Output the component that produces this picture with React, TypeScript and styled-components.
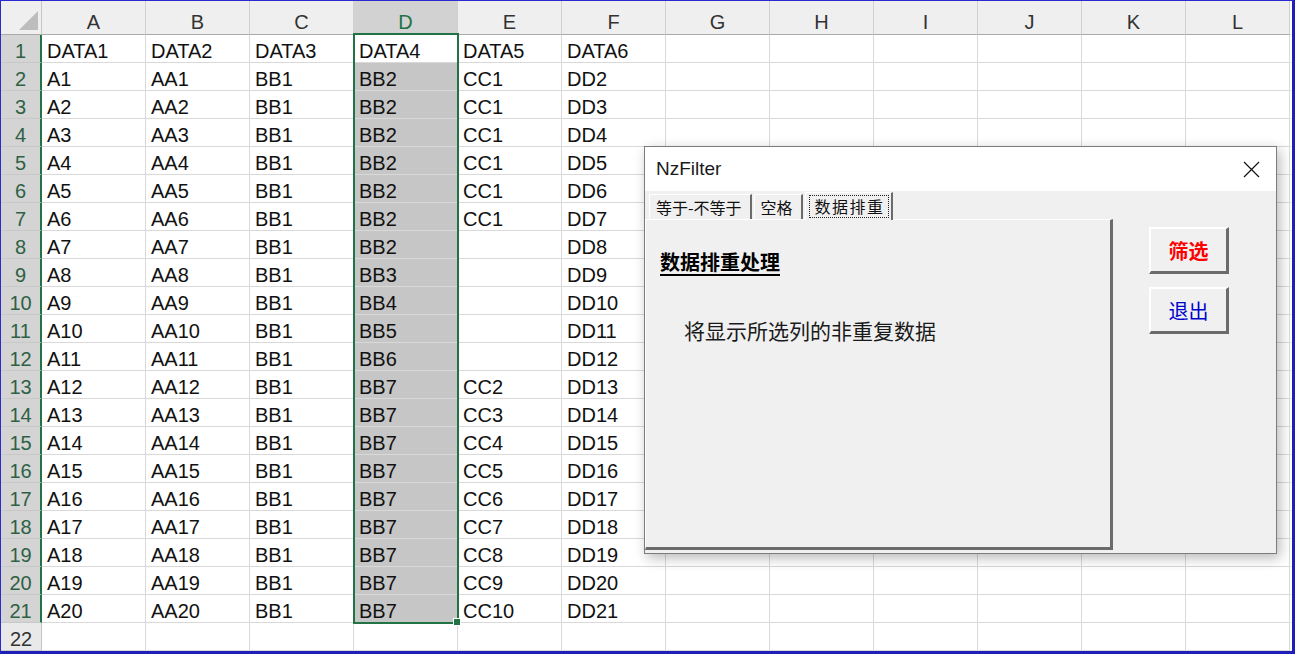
import React from 'react'
import styled, { createGlobalStyle } from 'styled-components'

const GlobalStyle = createGlobalStyle`
  html, body {
    margin: 0;
    padding: 0;
    background: #ffffff;
  }
  body {
    font-family: 'Liberation Sans', 'Noto Sans CJK SC', sans-serif;
  }
`

const COLS = ['A', 'B', 'C', 'D', 'E', 'F', 'G', 'H', 'I', 'J', 'K', 'L']
const ACTIVE_COL = 3

const buildRows = (): string[][] => {
  const rows: string[][] = [['DATA1', 'DATA2', 'DATA3', 'DATA4', 'DATA5', 'DATA6']]
  for (let i = 1; i <= 20; i++) {
    let d = 'BB7'
    if (i <= 7) d = 'BB2'
    else if (i <= 11) d = `BB${i - 5}`
    let e = ''
    if (i <= 6) e = 'CC1'
    else if (i >= 12) e = `CC${i - 10}`
    rows.push([`A${i}`, `AA${i}`, 'BB1', d, e, `DD${i + 1}`])
  }
  rows.push([])
  return rows
}

const Frame = styled.div`
  position: relative;
  width: 1295px;
  height: 654px;
  box-sizing: border-box;
  border-top: 1px solid #2a2ad0;
  border-left: 1px solid #2a2ad0;
  border-right: 3px solid #1f1fb8;
  border-bottom: 3px solid #1f1fb8;
  overflow: hidden;
  background: #ffffff;
`

const Sheet = styled.div`
  position: relative;
  display: grid;
  grid-template-columns: 41px repeat(12, 104px) 1fr;
  grid-template-rows: 34px repeat(22, 28px);
`

const Corner = styled.div`
  box-sizing: border-box;
  background: #efefef;
  border-right: 1px solid #c6c6c6;
  border-bottom: 1px solid #ababab;
  display: flex;
  align-items: flex-end;
  justify-content: flex-end;
  padding: 0 3px 4px 0;
`

const Triangle = styled.div`
  width: 0;
  height: 0;
  border-left: 19px solid transparent;
  border-bottom: 19px solid #bdbdbd;
`

const ColHead = styled.div<{ $active?: boolean }>`
  box-sizing: border-box;
  background: ${(p) => (p.$active ? '#d2d2d2' : '#efefef')};
  color: ${(p) => (p.$active ? '#217346' : '#333333')};
  border-right: 1px solid #d0d0d0;
  border-bottom: ${(p) => (p.$active ? '2px solid #217346' : '1px solid #ababab')};
  font-size: 20px;
  display: flex;
  align-items: center;
  justify-content: center;
  padding-top: 10px;
`

const RowHead = styled.div<{ $active?: boolean }>`
  box-sizing: border-box;
  background: ${(p) => (p.$active ? '#d4d4d4' : '#e9e9e9')};
  color: ${(p) => (p.$active ? '#2e6144' : '#333333')};
  border-right: ${(p) => (p.$active ? '2px solid #217346' : '1px solid #c6c6c6')};
  border-bottom: 1px solid #c8c8c8;
  font-size: 20px;
  display: flex;
  align-items: center;
  justify-content: center;
  padding-top: 6px;
`

const Cell = styled.div<{ $shade?: boolean }>`
  box-sizing: border-box;
  background: ${(p) => (p.$shade ? '#c6c6c6' : '#ffffff')};
  border-right: 1px solid #d9d9d9;
  border-bottom: 1px solid #d9d9d9;
  color: #111111;
  font-size: 20px;
  line-height: 27px;
  padding: 3px 0 0 5px;
  white-space: nowrap;
  overflow: hidden;
`

const Filler = styled.div`
  background: #ffffff;
  border-bottom: 1px solid #ececec;
`

const Selection = styled.div`
  position: absolute;
  left: 352px;
  top: 32px;
  width: 106px;
  height: 591px;
  box-sizing: border-box;
  border: 2px solid #217346;
  pointer-events: none;
`

const FillHandle = styled.div`
  position: absolute;
  left: 452px;
  top: 617px;
  width: 8px;
  height: 8px;
  box-sizing: border-box;
  background: #217346;
  border: 1px solid #ffffff;
`

/* ---- dialog ---- */

const Dialog = styled.div`
  position: absolute;
  left: 643px;
  top: 145px;
  width: 633px;
  height: 408px;
  box-sizing: border-box;
  border: 1px solid #7c7c7c;
  box-shadow: 3px 4px 12px rgba(0, 0, 0, 0.28);
  display: flex;
  flex-direction: column;
  font-family: 'Noto Sans CJK SC', 'Liberation Sans', sans-serif;
`

const TitleBar = styled.div`
  height: 44px;
  background: #ffffff;
  display: flex;
  align-items: center;
  justify-content: space-between;
  padding: 0 16px 0 11px;
`

const Title = styled.span`
  font-family: 'Liberation Sans', sans-serif;
  font-size: 19px;
  color: #1a1a1a;
`

const Body = styled.div`
  flex: 1;
  background: #f0f0f0;
  display: flex;
`

const LeftPane = styled.div`
  width: 468px;
  display: flex;
  flex-direction: column;
`

const TabStrip = styled.div`
  height: 28px;
  display: flex;
  align-items: flex-end;
  padding-left: 4px;
  gap: 2px;
  position: relative;
  z-index: 1;
`

const Tab = styled.div<{ $selected?: boolean }>`
  box-sizing: border-box;
  height: ${(p) => (p.$selected ? '28px' : '25px')};
  margin-bottom: ${(p) => (p.$selected ? '-1px' : '0')};
  background: #f0f0f0;
  border-top: 1px solid #ffffff;
  border-left: 1px solid #ffffff;
  border-right: 2px solid #6b6b6b;
  padding: ${(p) => (p.$selected ? '2px 2px 2px 3px' : '0 8px 0 6px')};
  font-size: 16px;
  color: #111111;
  display: flex;
  align-items: center;
`

const FocusBox = styled.span`
  border: 1px dotted #222222;
  padding: 0 3px 0 5px;
  letter-spacing: 1.5px;
  line-height: 21px;
`

const Panel = styled.div`
  height: 331px;
  box-sizing: border-box;
  border-top: 1px solid #ffffff;
  border-left: 1px solid #ffffff;
  border-right: 3px solid #6b6b6b;
  border-bottom: 3px solid #6b6b6b;
  display: flex;
  flex-direction: column;
  padding: 27px 0 0 14px;
`

const Heading = styled.div`
  font-size: 20px;
  font-weight: 700;
  text-decoration: underline;
  text-underline-offset: 4px;
  color: #000000;
  line-height: 30px;
`

const Note = styled.div`
  margin: 38px 0 0 24px;
  font-size: 21px;
  color: #1a1a1a;
  line-height: 30px;
`

const RightPane = styled.div`
  display: flex;
  flex-direction: column;
  gap: 13px;
  padding: 36px 0 0 36px;
`

const DlgButton = styled.button<{ $tone: 'red' | 'blue' }>`
  width: 80px;
  height: 47px;
  box-sizing: border-box;
  background: #f0f0f0;
  border-top: 2px solid #ffffff;
  border-left: 2px solid #ffffff;
  border-right: 3px solid #6b6b6b;
  border-bottom: 3px solid #6b6b6b;
  padding: 0;
  font-family: 'Noto Sans CJK SC', sans-serif;
  font-size: 20px;
  font-weight: ${(p) => (p.$tone === 'red' ? 700 : 400)};
  color: ${(p) => (p.$tone === 'red' ? '#ff0000' : '#0000cc')};
`

const CloseIcon = () => (
  <svg width="17" height="17" viewBox="0 0 17 17">
    <path d="M1 1 L16 16 M16 1 L1 16" stroke="#111" strokeWidth="1.2" fill="none" />
  </svg>
)

export default function App() {
  const rows = buildRows()
  return (
    <>
      <GlobalStyle />
      <Frame>
        <Sheet>
          <Corner>
            <Triangle />
          </Corner>
          {COLS.map((c, i) => (
            <ColHead key={c} $active={i === ACTIVE_COL}>
              {c}
            </ColHead>
          ))}
          <Filler />
          {rows.map((row, r) => (
            <React.Fragment key={r}>
              <RowHead $active={r < 21}>{r + 1}</RowHead>
              {COLS.map((c, i) => (
                <Cell key={c} $shade={i === ACTIVE_COL && r >= 1 && r < 21}>
                  {row[i] ?? ''}
                </Cell>
              ))}
              <Filler />
            </React.Fragment>
          ))}
          <Selection />
          <FillHandle />
        </Sheet>

        <Dialog>
          <TitleBar>
            <Title>NzFilter</Title>
            <CloseIcon />
          </TitleBar>
          <Body>
            <LeftPane>
              <TabStrip>
                <Tab>等于-不等于</Tab>
                <Tab>空格</Tab>
                <Tab $selected>
                  <FocusBox>数据排重</FocusBox>
                </Tab>
              </TabStrip>
              <Panel>
                <Heading>数据排重处理</Heading>
                <Note>将显示所选列的非重复数据</Note>
              </Panel>
            </LeftPane>
            <RightPane>
              <DlgButton $tone="red">筛选</DlgButton>
              <DlgButton $tone="blue">退出</DlgButton>
            </RightPane>
          </Body>
        </Dialog>
      </Frame>
    </>
  )
}
